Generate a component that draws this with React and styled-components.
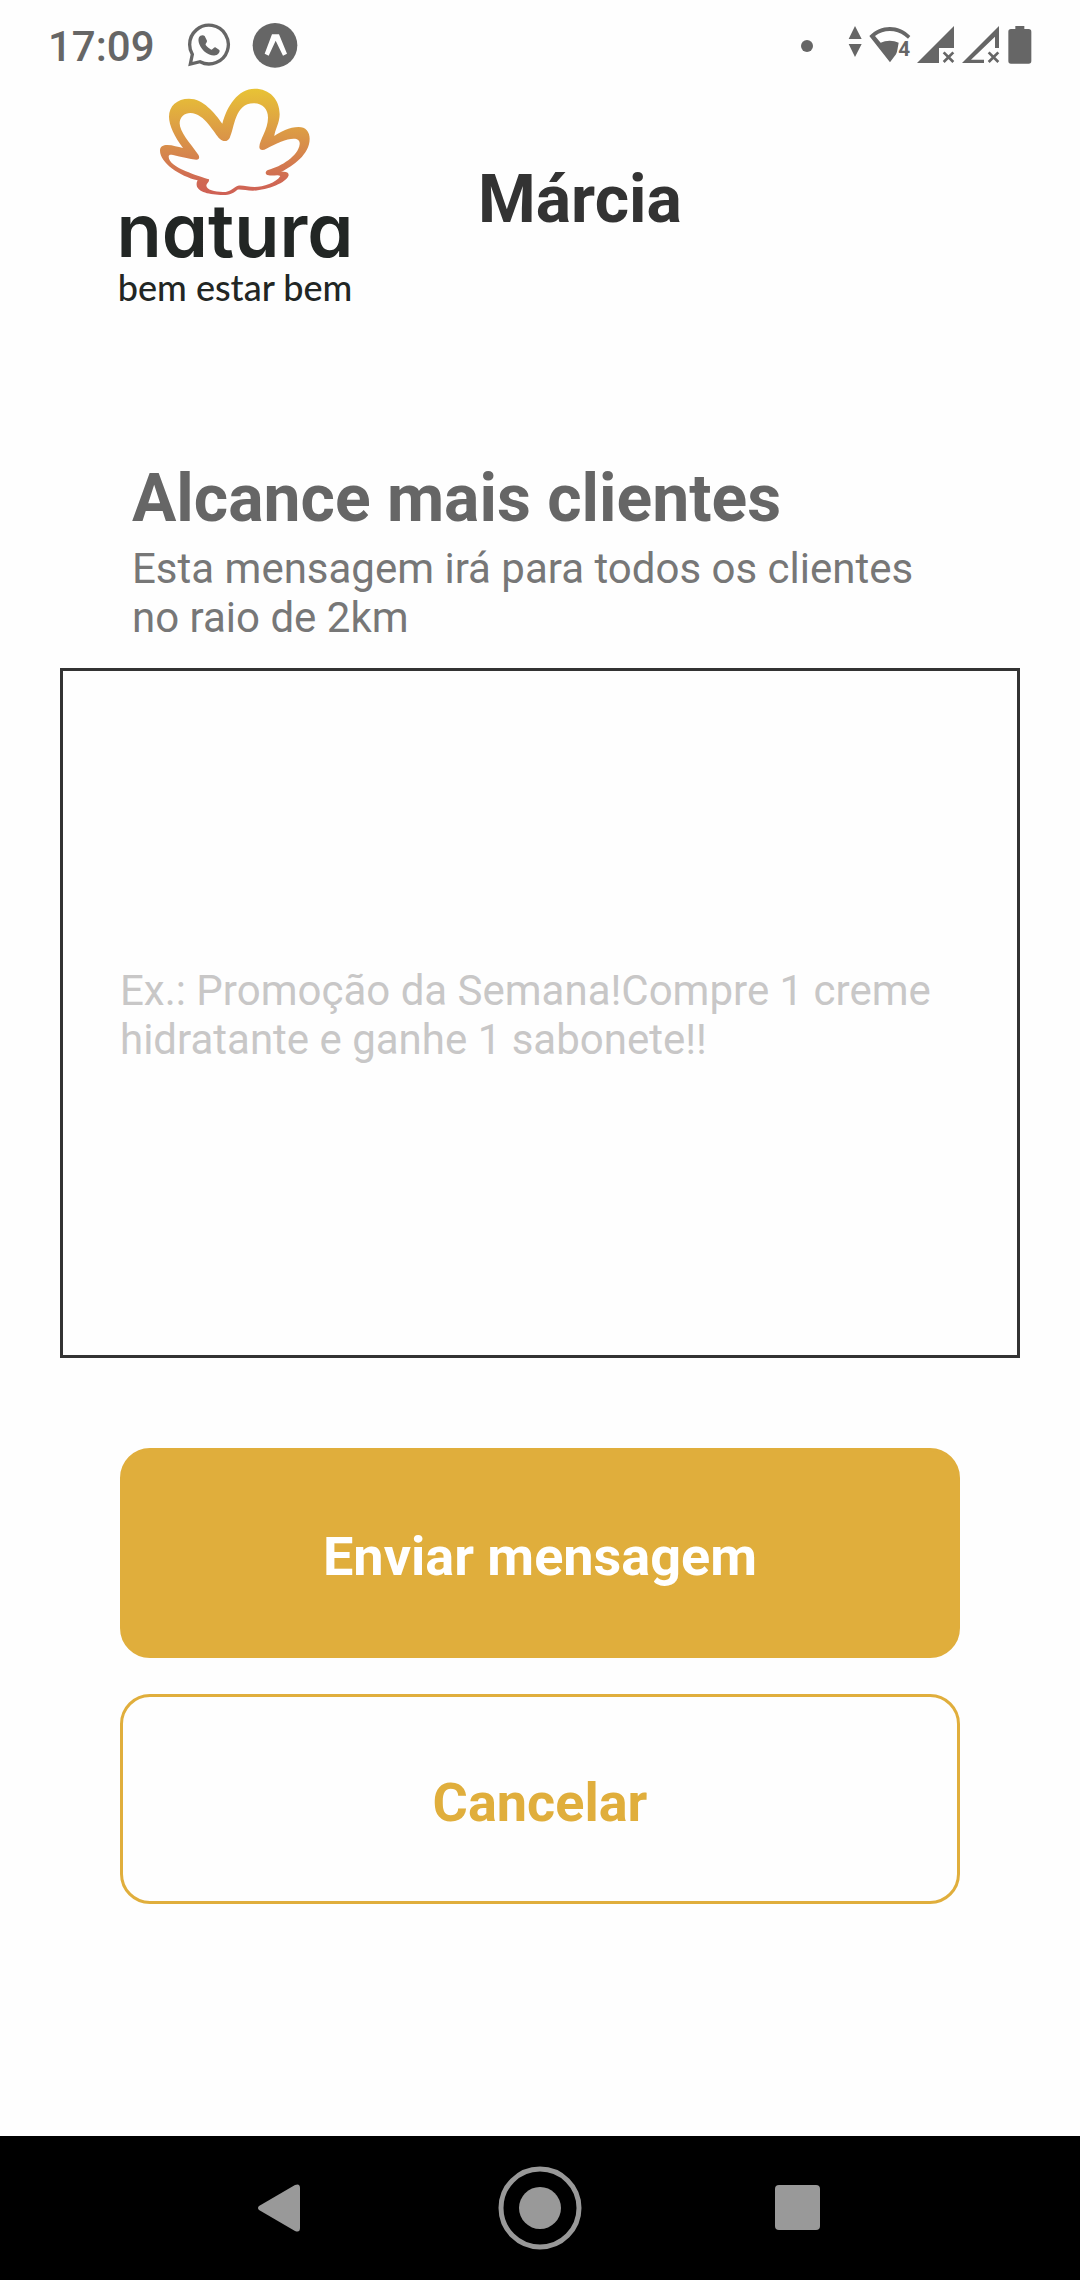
import React from "react";
import styled, { createGlobalStyle } from "styled-components";

const GlobalStyle = createGlobalStyle`
  *, *::before, *::after { box-sizing: border-box; }
  body {
    margin: 0;
    background: #fefefe;
    font-family: Roboto, "Liberation Sans", sans-serif;
  }
  h1, h2, p { margin: 0; }
`;

const Screen = styled.div`
  display: flex;
  flex-direction: column;
  min-height: 100vh;
`;

const StatusBar = styled.div`
  display: flex;
  align-items: center;
  justify-content: space-between;
  height: 72px;
  padding: 20px 46px 0 48px;
  color: #666;
`;

const StatusGroup = styled.div`
  display: flex;
  align-items: center;
  gap: ${(p) => p.$gap}px;
`;

const Clock = styled.span`
  min-width: 118px;
  font-size: 42px;
  line-height: 49px;
  font-weight: 500;
`;

const StatusIcon = styled.svg`
  display: block;
  flex: none;
  fill: currentColor;
`;

const NotificationDot = styled.span`
  width: 12px;
  height: 12px;
  margin-right: 29px;
  border-radius: 50%;
  background: currentColor;
`;

const Header = styled.header`
  display: flex;
  align-items: center;
  gap: 126px;
  padding: 14px 60px 0 118px;
`;

const Brand = styled.div`
  display: flex;
  flex-direction: column;
  align-items: center;
  flex: none;
  width: 234px;
  color: #222624;
  white-space: nowrap;
`;

const Wordmark = styled.span`
  font-family: Inter, sans-serif;
  font-feature-settings: "cv11";
  font-size: 74px;
  line-height: 68px;
  font-weight: 600;
`;

const Tagline = styled.span`
  font-family: Lato, sans-serif;
  font-size: 36px;
  line-height: 46px;
  font-weight: 500;
`;

const UserName = styled.h1`
  padding-top: 4px;
  font-size: 66px;
  line-height: 78px;
  font-weight: 700;
  color: #333;
`;

const Content = styled.main`
  display: flex;
  flex-direction: column;
  flex: 1;
  padding: 150px 60px 60px;
`;

const Intro = styled.div`
  display: flex;
  flex-direction: column;
  gap: 6px;
  padding: 0 72px;
  margin-bottom: 26px;
`;

const Title = styled.h2`
  font-size: 66px;
  line-height: 78px;
  font-weight: 700;
  color: #666;
`;

const Description = styled.label`
  font-size: 42px;
  line-height: 49px;
  color: #777;
`;

const MessageBox = styled.textarea`
  display: block;
  width: 100%;
  height: 690px;
  padding: 295px 57px 0;
  border: 3px solid #333;
  border-radius: 0;
  background: transparent;
  font-family: inherit;
  font-size: 42px;
  line-height: 49px;
  color: #333;
  resize: none;
  outline: none;

  &::placeholder {
    color: #c8c7c7;
    opacity: 1;
  }
`;

const Actions = styled.div`
  display: flex;
  flex-direction: column;
  gap: 36px;
  padding: 90px 60px 0;
`;

const ActionButton = styled.button`
  height: 210px;
  padding: 8px 24px 0;
  border: 3px solid #e0ae3c;
  border-radius: 30px;
  background: ${(p) => (p.$outlined ? "transparent" : "#e0ae3c")};
  color: ${(p) => (p.$outlined ? "#e0ae3c" : "#fff")};
  font-family: inherit;
  font-size: 54px;
  line-height: 64px;
  font-weight: 700;
  cursor: pointer;
`;

const NavBar = styled.nav`
  display: flex;
  justify-content: center;
  height: 144px;
  background: #000;
`;

const NavButton = styled.button`
  display: flex;
  align-items: center;
  justify-content: center;
  width: 258px;
  padding: 0;
  border: 0;
  background: transparent;
  color: #999;
  cursor: pointer;
`;

function FlowerIcon() {
  return (
    <svg width="156" height="110" viewBox="172 20 468 330" aria-hidden="true">
      <defs>
        <linearGradient id="petals" x1="0" y1="0" x2="0" y2="1">
          <stop offset="0" stopColor="#e8c335" />
          <stop offset="0.3" stopColor="#dfa542" />
          <stop offset="0.6" stopColor="#d6874c" />
          <stop offset="0.85" stopColor="#d06a53" />
          <stop offset="1" stopColor="#cf6055" />
        </linearGradient>
      </defs>
      <path
        fill="url(#petals)"
        fillRule="evenodd"
        d="M181 214C181 202 190 197 203 197C220 197 234 203 250 206C225 172 208 138 208 112C208 80 232 58 268 58C310 58 345 100 368 133C382 80 415 28 465 28C510 28 540 60 540 105C540 130 525 155 524 170C540 158 570 143 597 143C618 143 630 157 630 178C630 225 580 260 544 278C556 275 568 278 567 288C562 310 500 334 460 334C440 334 425 329 413 331C405 340 390 347 370 347C330 347 293 338 291 318C290 310 293 305 294 303C240 290 181 250 181 214Z
        M207 232C207 226 212 226 220 227C245 232 270 240 290 241C300 241 300 232 296 226C270 190 240 158 240 132C240 112 255 101 272 101C315 101 345 165 360 178C370 188 384 188 390 176C405 145 405 72 462 72C490 72 505 90 505 115C505 150 480 180 479 203C479 213 490 214 500 208C530 192 560 178 582 178C595 178 601 184 600 195C596 230 545 262 505 272C495 276 496 287 507 288C520 291 535 284 542 290C530 310 490 323 465 323C445 323 430 317 415 319C400 324 395 338 370 338C345 338 320 332 320 318C321 312 330 308 328 300C300 290 207 265 207 232Z"
      />
    </svg>
  );
}

function WhatsAppIcon() {
  return (
    <StatusIcon width="46" height="46" viewBox="558 69 138 138" aria-hidden="true">
      <path
        fill="none"
        stroke="currentColor"
        strokeWidth="10"
        d="M571 192L577 163C570 152 569 143 569 134A58 58 0 1 1 600 185Z"
      />
      <path d="M597 112C600 105 610 104 614 108L621 122C622 127 615 131 617 135C622 142 628 146 634 149C638 149 641 142 646 142L657 149C662 153 656 162 650 165C640 169 625 164 614 155C602 145 591 125 597 112Z" />
    </StatusIcon>
  );
}

function ExpoIcon() {
  return (
    <StatusIcon width="46" height="46" viewBox="755 69 138 138" aria-hidden="true">
      <circle cx="824" cy="136" r="67" />
      <path fill="#fefefe" d="M815 103H836L860 161L848 167L826 122L805 167L793 161Z" />
    </StatusIcon>
  );
}

function TrafficIcon() {
  return (
    <StatusIcon width="16" height="40" viewBox="202 78 48 120" aria-hidden="true">
      <path d="M226 78L246 117H207ZM207 132H246L226 171Z" />
    </StatusIcon>
  );
}

function WifiIcon() {
  return (
    <StatusIcon width="43" height="40" viewBox="266 78 129 120" aria-hidden="true">
      <path d="M270 108C305 72 358 72 393 108L386 116L376 108C350 88 313 88 287 108L304 128C320 120 342 120 358 128C354 148 354 160 346 168L332 187Z" />
      <text x="357" y="169" fontFamily="Roboto, sans-serif" fontSize="62" fontWeight="700">
        4
      </text>
    </StatusIcon>
  );
}

function SignalIcon({ empty }) {
  return (
    <StatusIcon width="40" height="40" viewBox="408 78 120 120" aria-hidden="true">
      {empty ? (
        <path fillRule="evenodd" d="M411 189L522 78V144H510V110L438 179H477V189Z" />
      ) : (
        <path d="M411 189L522 78V144H477V189Z" />
      )}
      <path fill="none" stroke="currentColor" strokeWidth="8" d="M491 157L520 186M520 157L491 186" />
    </StatusIcon>
  );
}

function BatteryIcon() {
  return (
    <StatusIcon width="28" height="40" viewBox="680 78 84 120" aria-hidden="true">
      <path d="M708 78H735V87H748Q756 87 756 95V183Q756 191 748 191H695Q687 191 687 183V95Q687 87 695 87H708Z" />
    </StatusIcon>
  );
}

export default function App() {
  return (
    <Screen>
      <GlobalStyle />
      <StatusBar>
        <StatusGroup $gap={20}>
          <Clock>17:09</Clock>
          <WhatsAppIcon />
          <ExpoIcon />
        </StatusGroup>
        <StatusGroup $gap={5}>
          <NotificationDot />
          <TrafficIcon />
          <WifiIcon />
          <SignalIcon />
          <SignalIcon empty />
          <BatteryIcon />
        </StatusGroup>
      </StatusBar>

      <Header>
        <Brand>
          <FlowerIcon />
          <Wordmark>natura</Wordmark>
          <Tagline>bem estar bem</Tagline>
        </Brand>
        <UserName>Márcia</UserName>
      </Header>

      <Content>
        <Intro>
          <Title>Alcance mais clientes</Title>
          <Description htmlFor="message">
            Esta mensagem irá para todos os clientes no raio de 2km
          </Description>
        </Intro>
        <MessageBox
          id="message"
          placeholder="Ex.: Promoção da Semana!Compre 1 creme hidratante e ganhe 1 sabonete!!"
        />
        <Actions>
          <ActionButton type="button">Enviar mensagem</ActionButton>
          <ActionButton type="button" $outlined>
            Cancelar
          </ActionButton>
        </Actions>
      </Content>

      <NavBar>
        <NavButton type="button" aria-label="Voltar">
          <svg width="48" height="48" viewBox="0 0 48 48" fill="currentColor">
            <path d="M1 22L37 1Q42 -1 42 4V44Q42 49 37 47L1 26Q-1 24 1 22Z" />
          </svg>
        </NavButton>
        <NavButton type="button" aria-label="Início">
          <svg width="84" height="84" viewBox="0 0 84 84" fill="currentColor">
            <circle cx="42" cy="42" r="39" fill="none" stroke="currentColor" strokeWidth="5" />
            <circle cx="42" cy="42" r="21" />
          </svg>
        </NavButton>
        <NavButton type="button" aria-label="Recentes">
          <svg width="46" height="46" viewBox="0 0 46 46" fill="currentColor">
            <rect width="45" height="45" rx="4" />
          </svg>
        </NavButton>
      </NavBar>
    </Screen>
  );
}
